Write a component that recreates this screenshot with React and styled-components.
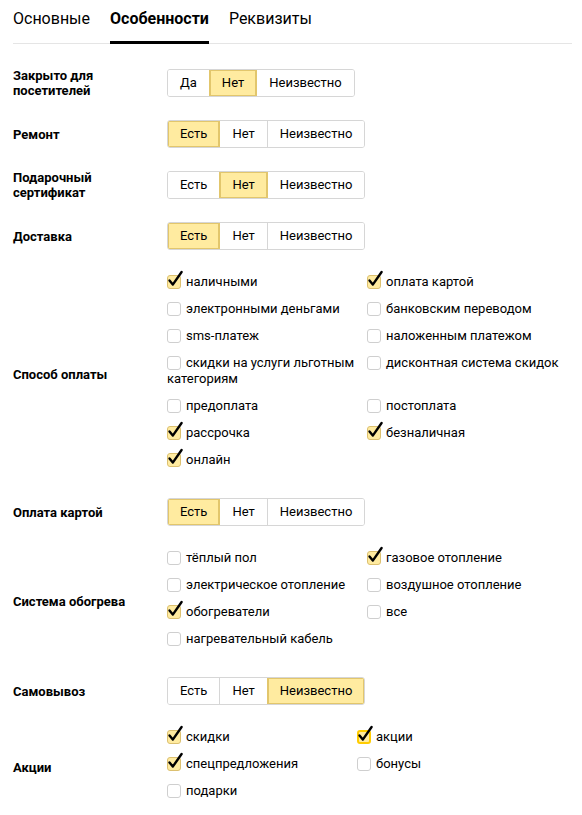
import React, { useState } from 'react';
import styled, { createGlobalStyle } from 'styled-components';

const GlobalStyle = createGlobalStyle`
    body {
        margin: 0;
        background: #ffffff;
        font-family: Roboto, 'Noto Sans', Arial, sans-serif;
        color: #000000;
    }
`;

const Page = styled.div`
    padding: 0 10px 20px 13px;
`;

// Tabs
const TabBar = styled.div`
    display: flex;
    gap: 20px;
    border-bottom: 1px solid #e5e5e5;
`;

const Tab = styled.div`
    font-size: 16px;
    line-height: 22px;
    padding: 8px 0 11px;
    margin-bottom: -1px;
    border-bottom: 3px solid ${(props) => (props.active ? '#000000' : 'transparent')};
    font-weight: ${(props) => (props.active ? 700 : 400)};
    color: #000000;
    cursor: pointer;
`;

// Form layout
const Form = styled.div`
    padding-top: 25px;
    display: flex;
    flex-direction: column;
    gap: 23px;
`;

const Row = styled.div`
    display: flex;
    align-items: center;
    min-height: 28px;
`;

const Label = styled.div`
    width: 154px;
    flex-shrink: 0;
    font-size: 13px;
    line-height: 15px;
    margin: -1px 0;
    font-weight: 700;
    padding-right: 10px;
    box-sizing: border-box;
`;

// Segmented control
const Segments = styled.div`
    display: inline-flex;
    border: 1px solid #d6d6d6;
    border-radius: 3px;
    overflow: hidden;
`;

const Segment = styled.button`
    font-family: inherit;
    font-size: 13px;
    line-height: 26px;
    height: 26px;
    padding: 0 12px;
    margin: 0;
    border: none;
    border-left: 1px solid ${(props) => (props.active || props.prevActive ? '#e2c66c' : '#d6d6d6')};
    background: ${(props) => (props.active ? '#ffeba0' : '#ffffff')};
    box-shadow: ${(props) => (props.active ? 'inset 0 0 0 1px #e2c66c' : 'none')};
    color: #000000;
    cursor: pointer;
    &:first-child {
        border-left: none;
    }
`;

// Checkbox groups
const CheckGrid = styled.div`
    display: grid;
    grid-template-columns: ${(props) => props.colWidth}px ${(props) => props.colWidth}px;
    row-gap: 11px;
    padding: 1px 0 7px;
`;

const CheckItem = styled.label`
    display: block;
    font-size: 13px;
    line-height: 16px;
    color: #000000;
    padding-right: 6px;
    cursor: pointer;
`;

const Box = styled.span`
    position: relative;
    display: inline-block;
    width: 14px;
    height: 14px;
    box-sizing: border-box;
    margin-right: 5px;
    vertical-align: -3px;
    border-radius: 3px;
    border: ${(props) =>
        props.focused ? '2px solid #ffcc00' : props.checked ? '1px solid #dcc070' : '1px solid #cfcfcf'};
    background: ${(props) => (props.checked ? '#ffeba0' : '#ffffff')};
`;

const Tick = styled.svg`
    position: absolute;
    left: ${(props) => (props.focused ? -1 : 0)}px;
    top: ${(props) => (props.focused ? -6 : -5)}px;
    overflow: visible;
`;

const Checkbox = ({ checked, focused, label }) => (
    <CheckItem>
        <Box checked={checked} focused={focused}>
            {checked && (
                <Tick focused={focused} width="16" height="18" viewBox="0 0 16 18">
                    <path d="M1.5 9.5 L4.8 13.6 L13.6 1" fill="none" stroke="#000" strokeWidth="2.4" strokeLinecap="round" strokeLinejoin="round" />
                </Tick>
            )}
        </Box>
        {label}
    </CheckItem>
);

const SegmentRow = ({ label, options, value }) => {
    const [current, setCurrent] = useState(value);
    return (
        <Row>
            <Label>{label}</Label>
            <Segments>
                {options.map((opt, i) => (
                    <Segment
                        key={opt}
                        active={current === opt}
                        prevActive={i > 0 && options[i - 1] === current}
                        onClick={() => setCurrent(opt)}
                    >
                        {opt}
                    </Segment>
                ))}
            </Segments>
        </Row>
    );
};

const CheckRow = ({ label, items, colWidth }) => (
    <Row>
        <Label>{label}</Label>
        <CheckGrid colWidth={colWidth}>
            {items.map((it, i) => (
                <Checkbox key={i} {...it} />
            ))}
        </CheckGrid>
    </Row>
);

const yesNo = ['Есть', 'Нет', 'Неизвестно'];

const payments = [
    { label: 'наличными', checked: true },
    { label: 'оплата картой', checked: true },
    { label: 'электронными деньгами' },
    { label: 'банковским переводом' },
    { label: 'sms-платеж' },
    { label: 'наложенным платежом' },
    { label: 'скидки на услуги льготным категориям' },
    { label: 'дисконтная система скидок' },
    { label: 'предоплата' },
    { label: 'постоплата' },
    { label: 'рассрочка', checked: true },
    { label: 'безналичная', checked: true },
    { label: 'онлайн', checked: true },
];

const heating = [
    { label: 'тёплый пол' },
    { label: 'газовое отопление', checked: true },
    { label: 'электрическое отопление' },
    { label: 'воздушное отопление' },
    { label: 'обогреватели', checked: true },
    { label: 'все' },
    { label: 'нагревательный кабель' },
];

const promos = [
    { label: 'скидки', checked: true },
    { label: 'акции', checked: true, focused: true },
    { label: 'спецпредложения', checked: true },
    { label: 'бонусы' },
    { label: 'подарки' },
];

const App = () => {
    const [tab, setTab] = useState('Особенности');
    const tabs = ['Основные', 'Особенности', 'Реквизиты'];

    return (
        <Page>
            <GlobalStyle />
            <TabBar>
                {tabs.map((t) => (
                    <Tab key={t} active={tab === t} onClick={() => setTab(t)}>
                        {t}
                    </Tab>
                ))}
            </TabBar>
            <Form>
                <SegmentRow label="Закрыто для посетителей" options={['Да', 'Нет', 'Неизвестно']} value="Нет" />
                <SegmentRow label="Ремонт" options={yesNo} value="Есть" />
                <SegmentRow label="Подарочный сертификат" options={yesNo} value="Нет" />
                <SegmentRow label="Доставка" options={yesNo} value="Есть" />
                <CheckRow label="Способ оплаты" items={payments} colWidth={200} />
                <SegmentRow label="Оплата картой" options={yesNo} value="Есть" />
                <CheckRow label="Система обогрева" items={heating} colWidth={200} />
                <SegmentRow label="Самовывоз" options={yesNo} value="Неизвестно" />
                <CheckRow label="Акции" items={promos} colWidth={190} />
            </Form>
        </Page>
    );
};

export default App;
